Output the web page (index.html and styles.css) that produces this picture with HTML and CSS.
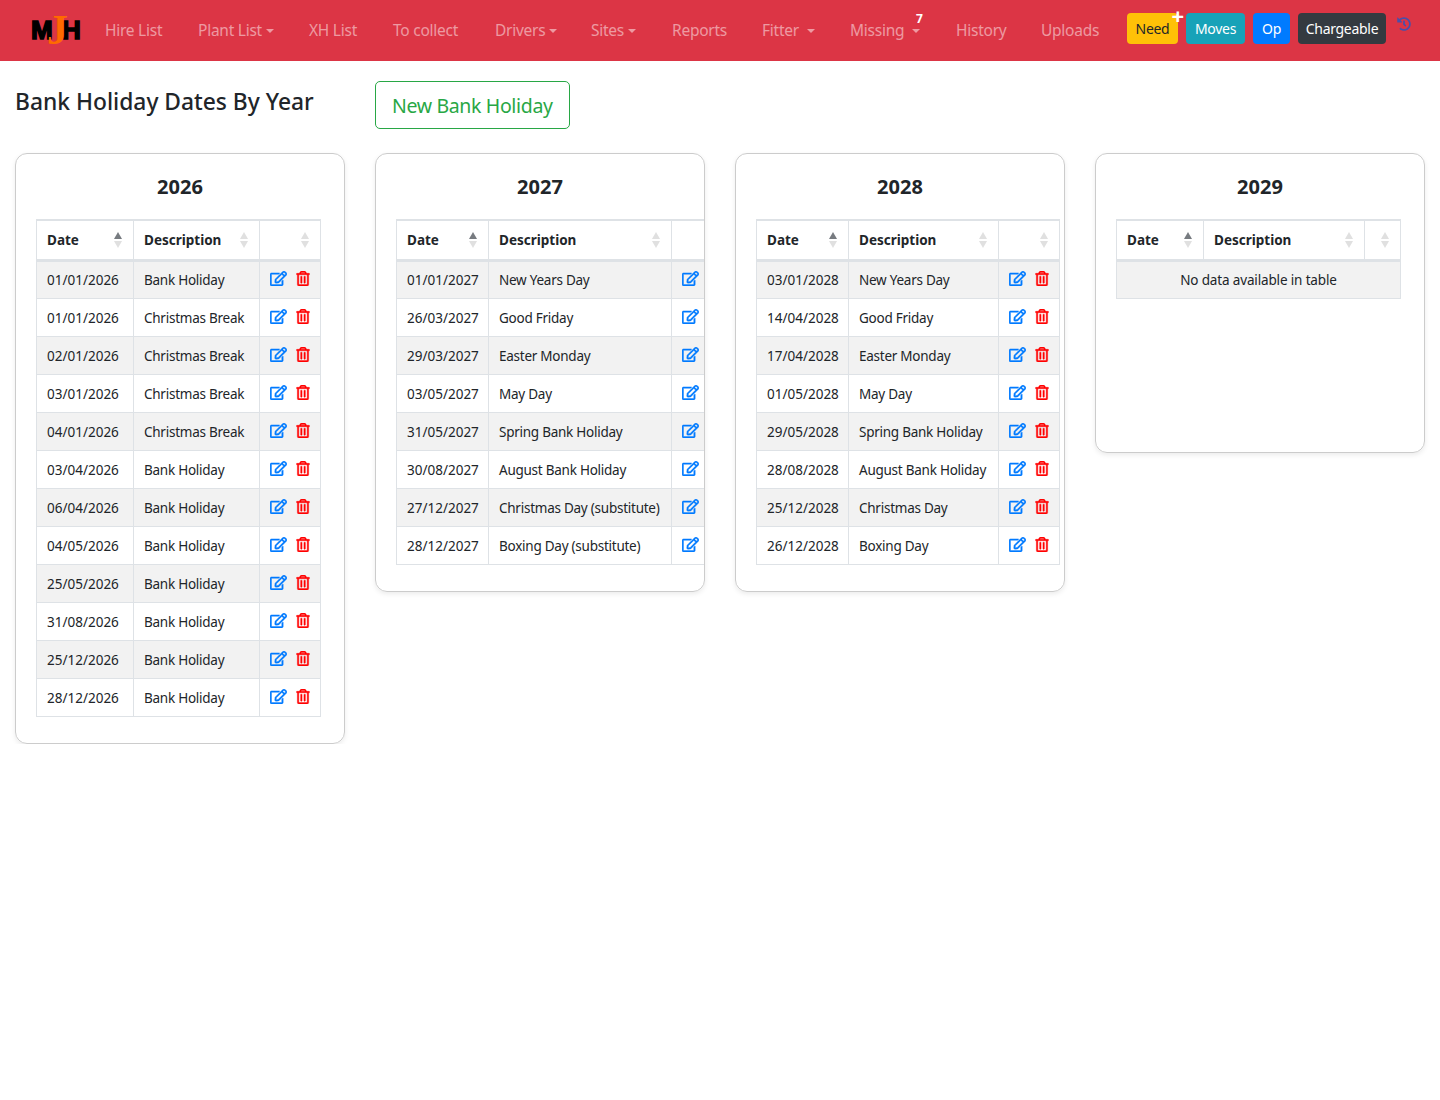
FILE: index.html
```html
<!DOCTYPE html>
<html lang="en">
<head>
    <meta charset="UTF-8">
    <meta name="viewport" content="width=device-width, initial-scale=1.0">
    <title>Bank Holiday Dates By Year</title>
    <link rel="stylesheet" href="styles.css">
</head>
<body>
    <svg class="icon-defs" aria-hidden="true">
        <symbol id="i-edit" viewBox="0 0 576 512"><path d="M402.3 344.9l32-32c5-5 13.7-1.5 13.7 5.7V464c0 26.5-21.5 48-48 48H48c-26.5 0-48-21.5-48-48V112c0-26.5 21.5-48 48-48h273.5c7.1 0 10.7 8.6 5.7 13.7l-32 32c-1.5 1.5-3.5 2.3-5.7 2.3H48v352h352V350.5c0-2.1.8-4.1 2.3-5.6zm156.6-201.8L296.3 405.7l-90.4 10c-26.2 2.9-48.5-19.2-45.6-45.6l10-90.4L432.9 17.1c22.9-22.9 59.9-22.9 82.7 0l43.2 43.2c22.9 22.9 22.9 60 .1 82.8zM460.1 174L402 115.9 216.2 301.8l-7.3 65.3 65.3-7.3L460.1 174zm64.8-79.7l-43.2-43.2c-4.1-4.1-10.8-4.1-14.8 0L436 82l58.1 58.1 30.9-30.9c4-4.2 4-10.8-.1-14.9z"/></symbol>
        <symbol id="i-trash" viewBox="0 0 448 512"><path d="M268 416h24a12 12 0 0 0 12-12V188a12 12 0 0 0-12-12h-24a12 12 0 0 0-12 12v216a12 12 0 0 0 12 12zM432 80h-82.41l-34-56.7A48 48 0 0 0 274.41 0H173.59a48 48 0 0 0-41.16 23.3L98.41 80H16A16 16 0 0 0 0 96v16a16 16 0 0 0 16 16h16v336a48 48 0 0 0 48 48h288a48 48 0 0 0 48-48V128h16a16 16 0 0 0 16-16V96a16 16 0 0 0-16-16zM171.84 50.91A6 6 0 0 1 177 48h94a6 6 0 0 1 5.15 2.91L293.61 80H154.39zM368 464H80V128h288zm-212-48h24a12 12 0 0 0 12-12V188a12 12 0 0 0-12-12h-24a12 12 0 0 0-12 12v216a12 12 0 0 0 12 12z"/></symbol>
    </svg>

    <nav class="navbar">
        <a class="logo" href="#"><span>M</span><span class="logo-j">J</span><span>H</span></a>
        <ul class="nav-links">
            <li class="w-hire"><a href="#">Hire List</a></li>
            <li class="w-plant"><a class="caret" href="#">Plant List</a></li>
            <li class="w-xh"><a href="#">XH List</a></li>
            <li class="w-collect"><a href="#">To collect</a></li>
            <li class="w-drivers"><a class="caret" href="#">Drivers</a></li>
            <li class="w-sites"><a class="caret" href="#">Sites</a></li>
            <li class="w-reports"><a href="#">Reports</a></li>
            <li class="w-fitter"><a class="caret" href="#">Fitter </a></li>
            <li class="w-missing"><a class="caret" href="#">Missing </a><span class="count">7</span></li>
            <li class="w-history"><a href="#">History</a></li>
            <li class="w-uploads"><a href="#">Uploads</a></li>
        </ul>
        <div class="nav-buttons">
            <a class="btn btn-need" href="#">Need<span class="plus">+</span></a>
            <a class="btn btn-moves" href="#">Moves</a>
            <a class="btn btn-op" href="#">Op</a>
            <a class="btn btn-charge" href="#">Chargeable</a>
        </div>
        <svg class="history-icon" viewBox="0 0 512 512" aria-hidden="true"><path d="M504 255.531c.253 136.64-111.18 248.372-247.82 248.468-59.015.042-113.223-20.53-155.822-54.911-11.077-8.94-11.905-25.541-1.839-35.607l11.267-11.267c8.609-8.609 22.353-9.551 31.891-1.984C173.062 425.135 212.781 440 256 440c101.705 0 184-82.311 184-184 0-101.705-82.311-184-184-184-48.814 0-93.149 18.969-126.068 49.932l50.754 50.754c10.08 10.08 2.941 27.314-11.313 27.314H24c-8.837 0-16-7.163-16-16V38.627c0-14.254 17.234-21.393 27.314-11.314l49.372 49.372C129.209 34.136 189.552 8 256 8c136.81 0 247.747 110.78 248 247.531zm-180.912 78.784l9.823-12.63c8.138-10.463 6.253-25.542-4.21-33.679L288 256.349V152c0-13.255-10.745-24-24-24h-16c-13.255 0-24 10.745-24 24v135.651l65.409 50.874c10.463 8.137 25.541 6.253 33.679-4.21z"/></svg>
    </nav>

    <div class="page-head">
        <h3>Bank Holiday Dates By Year</h3>
        <a class="btn-new" href="#">New Bank Holiday</a>
    </div>

    <div class="cards">
        <div class="card">
            <h4>2026</h4>
            <table class="tbl-2026">
                <thead><tr><th class="sorted">Date</th><th>Description</th><th></th></tr></thead>
                <tbody>
                    <tr><td>01/01/2026</td><td>Bank Holiday</td><td class="acts"><svg class="i-edit"><use href="#i-edit"/></svg><svg class="i-trash"><use href="#i-trash"/></svg></td></tr>
                    <tr><td>01/01/2026</td><td>Christmas Break</td><td class="acts"><svg class="i-edit"><use href="#i-edit"/></svg><svg class="i-trash"><use href="#i-trash"/></svg></td></tr>
                    <tr><td>02/01/2026</td><td>Christmas Break</td><td class="acts"><svg class="i-edit"><use href="#i-edit"/></svg><svg class="i-trash"><use href="#i-trash"/></svg></td></tr>
                    <tr><td>03/01/2026</td><td>Christmas Break</td><td class="acts"><svg class="i-edit"><use href="#i-edit"/></svg><svg class="i-trash"><use href="#i-trash"/></svg></td></tr>
                    <tr><td>04/01/2026</td><td>Christmas Break</td><td class="acts"><svg class="i-edit"><use href="#i-edit"/></svg><svg class="i-trash"><use href="#i-trash"/></svg></td></tr>
                    <tr><td>03/04/2026</td><td>Bank Holiday</td><td class="acts"><svg class="i-edit"><use href="#i-edit"/></svg><svg class="i-trash"><use href="#i-trash"/></svg></td></tr>
                    <tr><td>06/04/2026</td><td>Bank Holiday</td><td class="acts"><svg class="i-edit"><use href="#i-edit"/></svg><svg class="i-trash"><use href="#i-trash"/></svg></td></tr>
                    <tr><td>04/05/2026</td><td>Bank Holiday</td><td class="acts"><svg class="i-edit"><use href="#i-edit"/></svg><svg class="i-trash"><use href="#i-trash"/></svg></td></tr>
                    <tr><td>25/05/2026</td><td>Bank Holiday</td><td class="acts"><svg class="i-edit"><use href="#i-edit"/></svg><svg class="i-trash"><use href="#i-trash"/></svg></td></tr>
                    <tr><td>31/08/2026</td><td>Bank Holiday</td><td class="acts"><svg class="i-edit"><use href="#i-edit"/></svg><svg class="i-trash"><use href="#i-trash"/></svg></td></tr>
                    <tr><td>25/12/2026</td><td>Bank Holiday</td><td class="acts"><svg class="i-edit"><use href="#i-edit"/></svg><svg class="i-trash"><use href="#i-trash"/></svg></td></tr>
                    <tr><td>28/12/2026</td><td>Bank Holiday</td><td class="acts"><svg class="i-edit"><use href="#i-edit"/></svg><svg class="i-trash"><use href="#i-trash"/></svg></td></tr>
                </tbody>
            </table>
        </div>

        <div class="card">
            <h4>2027</h4>
            <table class="tbl-2027">
                <thead><tr><th class="sorted">Date</th><th>Description</th><th></th></tr></thead>
                <tbody>
                    <tr><td>01/01/2027</td><td>New Years Day</td><td class="acts"><svg class="i-edit"><use href="#i-edit"/></svg></td></tr>
                    <tr><td>26/03/2027</td><td>Good Friday</td><td class="acts"><svg class="i-edit"><use href="#i-edit"/></svg></td></tr>
                    <tr><td>29/03/2027</td><td>Easter Monday</td><td class="acts"><svg class="i-edit"><use href="#i-edit"/></svg></td></tr>
                    <tr><td>03/05/2027</td><td>May Day</td><td class="acts"><svg class="i-edit"><use href="#i-edit"/></svg></td></tr>
                    <tr><td>31/05/2027</td><td>Spring Bank Holiday</td><td class="acts"><svg class="i-edit"><use href="#i-edit"/></svg></td></tr>
                    <tr><td>30/08/2027</td><td>August Bank Holiday</td><td class="acts"><svg class="i-edit"><use href="#i-edit"/></svg></td></tr>
                    <tr><td>27/12/2027</td><td>Christmas Day (substitute)</td><td class="acts"><svg class="i-edit"><use href="#i-edit"/></svg></td></tr>
                    <tr><td>28/12/2027</td><td>Boxing Day (substitute)</td><td class="acts"><svg class="i-edit"><use href="#i-edit"/></svg></td></tr>
                </tbody>
            </table>
        </div>

        <div class="card">
            <h4>2028</h4>
            <table class="tbl-2028">
                <thead><tr><th class="sorted">Date</th><th>Description</th><th></th></tr></thead>
                <tbody>
                    <tr><td>03/01/2028</td><td>New Years Day</td><td class="acts"><svg class="i-edit"><use href="#i-edit"/></svg><svg class="i-trash"><use href="#i-trash"/></svg></td></tr>
                    <tr><td>14/04/2028</td><td>Good Friday</td><td class="acts"><svg class="i-edit"><use href="#i-edit"/></svg><svg class="i-trash"><use href="#i-trash"/></svg></td></tr>
                    <tr><td>17/04/2028</td><td>Easter Monday</td><td class="acts"><svg class="i-edit"><use href="#i-edit"/></svg><svg class="i-trash"><use href="#i-trash"/></svg></td></tr>
                    <tr><td>01/05/2028</td><td>May Day</td><td class="acts"><svg class="i-edit"><use href="#i-edit"/></svg><svg class="i-trash"><use href="#i-trash"/></svg></td></tr>
                    <tr><td>29/05/2028</td><td>Spring Bank Holiday</td><td class="acts"><svg class="i-edit"><use href="#i-edit"/></svg><svg class="i-trash"><use href="#i-trash"/></svg></td></tr>
                    <tr><td>28/08/2028</td><td>August Bank Holiday</td><td class="acts"><svg class="i-edit"><use href="#i-edit"/></svg><svg class="i-trash"><use href="#i-trash"/></svg></td></tr>
                    <tr><td>25/12/2028</td><td>Christmas Day</td><td class="acts"><svg class="i-edit"><use href="#i-edit"/></svg><svg class="i-trash"><use href="#i-trash"/></svg></td></tr>
                    <tr><td>26/12/2028</td><td>Boxing Day</td><td class="acts"><svg class="i-edit"><use href="#i-edit"/></svg><svg class="i-trash"><use href="#i-trash"/></svg></td></tr>
                </tbody>
            </table>
        </div>

        <div class="card card-empty">
            <h4>2029</h4>
            <table class="tbl-2029">
                <thead><tr><th class="sorted">Date</th><th>Description</th><th></th></tr></thead>
                <tbody>
                    <tr><td class="empty" colspan="3">No data available in table</td></tr>
                </tbody>
            </table>
        </div>
    </div>
</body>
</html>
```

FILE: styles.css
```css
* {
    box-sizing: border-box;
}
body {
    font-family: "Noto Sans", "Open Sans", Arial, sans-serif;
    font-size: 14px;
    color: #212529;
    margin: 0;
    background-color: #fff;
}
a {
    text-decoration: none;
}
.icon-defs {
    display: none;
}

/* navbar */
.navbar {
    background-color: #dc3545;
    height: 61px;
    display: flex;
    align-items: flex-start;
    padding-left: 31px;
}
.logo {
    width: 74px;
    height: 61px;
    display: flex;
    align-items: center;
    position: relative;
    font-family: "Liberation Sans", Arial, sans-serif;
    font-weight: bold;
    font-size: 26px;
    color: #000;
    -webkit-text-stroke: 1.5px #000;
}
.logo span:first-child {
    width: 24px;
}
.logo span:last-child {
    margin-left: 7px;
}
.logo-j {
    position: absolute;
    left: 16px;
    top: 9px;
    font-family: "Liberation Serif", serif;
    font-size: 42px;
    line-height: 42px;
    color: #ff6a00;
    -webkit-text-stroke: 0;
}
.nav-links {
    list-style: none;
    margin: 0;
    padding: 0;
    display: flex;
    width: 1022px;
}
.nav-links li {
    position: relative;
    height: 61px;
    line-height: 61px;
    white-space: nowrap;
}
.nav-links a {
    color: rgba(255, 255, 255, .5);
    font-size: 15.5px;
    letter-spacing: -.25px;
}
.w-hire { width: 93px; }
.w-plant { width: 111px; }
.w-xh { width: 84px; }
.w-collect { width: 102px; }
.w-drivers { width: 96px; }
.w-sites { width: 81px; }
.w-reports { width: 90px; }
.w-fitter { width: 88px; }
.w-missing { width: 106px; }
.w-history { width: 85px; }
.w-uploads { width: 86px; }
.caret::after {
    content: "";
    display: inline-block;
    margin-left: 4px;
    vertical-align: 3px;
    border-top: 4px solid;
    border-left: 4px solid transparent;
    border-right: 4px solid transparent;
}
.count {
    position: absolute;
    left: 66px;
    top: 11px;
    line-height: 16px;
    font-size: 12px;
    font-weight: bold;
    color: #fff;
}
.nav-buttons {
    display: flex;
    gap: 8px;
    margin-top: 13px;
}
.btn {
    position: relative;
    display: block;
    height: 31px;
    line-height: 31px;
    text-align: center;
    border-radius: 4px;
    font-size: 14px;
    letter-spacing: -.3px;
    color: #fff;
    white-space: nowrap;
}
.btn-need { background-color: #ffc107; color: #212529; width: 51px; }
.btn-moves { background-color: #17a2b8; width: 59px; }
.btn-op { background-color: #007bff; width: 37px; }
.btn-charge { background-color: #343a40; width: 88px; }
.plus {
    position: absolute;
    right: -6px;
    top: -6px;
    line-height: 16px;
    font-size: 22px;
    font-weight: bold;
    letter-spacing: 0;
    color: #fff;
}
.history-icon {
    width: 14px;
    height: 14px;
    margin: 17px 0 0 11px;
    fill: #4a4fa8;
}

/* heading row */
.page-head {
    display: grid;
    grid-template-columns: repeat(4, 1fr);
    column-gap: 30px;
    padding: 20px 15px 24px;
    height: 92px;
    align-items: start;
}
.page-head h3 {
    margin: 4px 0 0;
    font-size: 22.8px;
    font-weight: 500;
    line-height: 34px;
    white-space: nowrap;
}
.btn-new {
    justify-self: start;
    width: 195px;
    height: 48px;
    line-height: 48px;
    padding-left: 16px;
    border: 1px solid #28a745;
    border-radius: 5px;
    font-size: 19.5px;
    letter-spacing: -.35px;
    color: #28a745;
    white-space: nowrap;
}

/* year cards */
.cards {
    display: grid;
    grid-template-columns: repeat(4, 1fr);
    column-gap: 30px;
    padding: 0 15px;
    align-items: start;
}
.card {
    border: 1px solid #ccc;
    border-radius: 12px;
    box-shadow: 0 2px 5px rgba(0, 0, 0, .08);
    padding: 0 0 26px 20px;
    overflow: hidden;
}
.card-empty {
    height: 300px;
}
.card h4 {
    margin: 0;
    height: 65px;
    line-height: 66px;
    text-align: center;
    font-size: 20px;
    font-weight: bold;
    padding-right: 20px;
}

/* tables */
table {
    border-collapse: collapse;
    table-layout: fixed;
    font-size: 13.5px;
}
.tbl-2026 { width: 284px; }
.tbl-2027 { width: 335px; }
.tbl-2028 { width: 303px; }
.tbl-2029 { width: 284px; }
.tbl-2026 th:nth-child(1) { width: 97px; }
.tbl-2026 th:nth-child(2) { width: 126px; }
.tbl-2026 th:nth-child(3) { width: 61px; }
.tbl-2027 th:nth-child(1) { width: 92px; }
.tbl-2027 th:nth-child(2) { width: 183px; }
.tbl-2027 th:nth-child(3) { width: 60px; }
.tbl-2028 th:nth-child(1) { width: 92px; }
.tbl-2028 th:nth-child(2) { width: 150px; }
.tbl-2028 th:nth-child(3) { width: 61px; }
.tbl-2029 th:nth-child(1) { width: 87px; }
.tbl-2029 th:nth-child(2) { width: 161px; }
.tbl-2029 th:nth-child(3) { width: 36px; }
th, td {
    border: 1px solid #dee2e6;
    padding: 1px 10px 0;
    height: 38px;
    text-align: left;
    white-space: nowrap;
}
tbody tr:first-child td {
    padding-top: 0;
}
td:nth-child(2) {
    letter-spacing: -.25px;
}
th {
    position: relative;
    height: 40px;
    padding-top: 0;
    border-top: 2px solid #dee2e6;
    border-bottom: 3px solid #dee2e6;
    font-weight: bold;
    background-color: #fff;
}
th::before, th::after {
    content: "";
    position: absolute;
    right: 11px;
    border-left: 4.5px solid transparent;
    border-right: 4.5px solid transparent;
}
th::before {
    top: 11px;
    border-bottom: 7px solid #e0e0e0;
}
th::after {
    top: 20px;
    border-top: 7px solid #e0e0e0;
}
th.sorted::before {
    border-bottom-color: #777b80;
}
tbody tr:nth-child(odd) td {
    background-color: #f2f2f2;
}
.empty {
    text-align: center;
    letter-spacing: -.15px;
}
.acts {
    padding-bottom: 5px;
}
tbody tr:first-child .acts {
    padding-bottom: 4px;
}
.acts svg {
    display: inline-block;
    vertical-align: middle;
    height: 15px;
    stroke-width: 14px;
}
.i-edit {
    width: 17px;
    fill: #007bff;
    stroke: #007bff;
}
.i-trash {
    width: 14px;
    height: 16px;
    margin-left: 9px;
    fill: #ff0000;
    stroke: #ff0000;
}
```
